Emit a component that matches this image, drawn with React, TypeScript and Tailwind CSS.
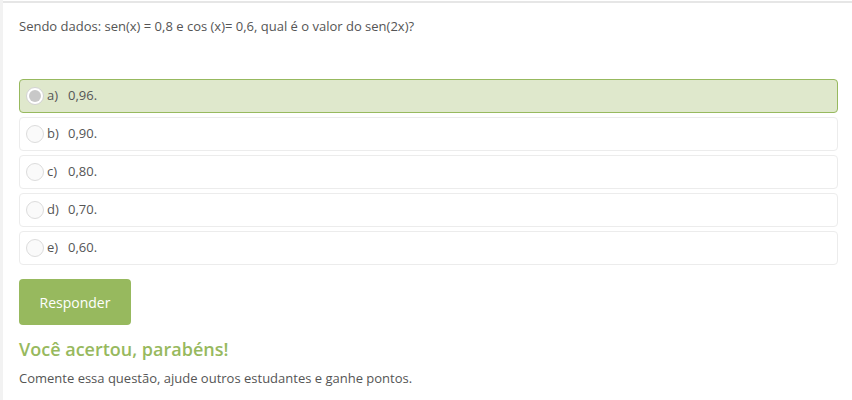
const options = [
  { letter: "a)", value: "0,96.", selected: true },
  { letter: "b)", value: "0,90." },
  { letter: "c)", value: "0,80." },
  { letter: "d)", value: "0,70." },
  { letter: "e)", value: "0,60." },
];

const App = () => {
  return (
    <div
      className="flex h-[400px] w-[852px] bg-white text-[#555]"
      style={{ fontFamily: '"Open Sans", sans-serif' }}
    >
      <div className="w-[3px] shrink-0 bg-[#f2f2f2]" />
      <div className="flex-1 pt-[1px]">
        <div className="border-t-2 border-[#e6e6e6] pl-[16px] pr-[14px]">
          <p className="mt-[13px] text-[13px] leading-[20px]">
            Sendo dados: sen(x) = 0,8 e cos (x)= 0,6, qual é o valor do sen(2x)?
          </p>

          <div className="mt-[43px] flex flex-col gap-[4px]">
            {options.map((opt) => (
              <div
                key={opt.letter}
                className={`flex h-[34px] items-center rounded-[4px] border pl-[6px] text-[13px] ${
                  opt.selected ? "border-[#97b95e] bg-[#dfe8cc]" : "border-[#ececec] bg-white"
                }`}
              >
                <span
                  className={`flex h-[18px] w-[18px] items-center justify-center rounded-full border ${
                    opt.selected ? "border-[#d2d2d2] bg-white" : "border-[#dcdcdc] bg-[#fafafa]"
                  }`}
                >
                  {opt.selected && <span className="h-[12px] w-[12px] rounded-full bg-[#c8c8c8]" />}
                </span>
                <span className="ml-[3px] w-[21px]">{opt.letter}</span>
                <span>{opt.value}</span>
              </div>
            ))}
          </div>

          <button className="mt-[14px] h-[46px] w-[112px] rounded-[4px] bg-[#97b95e] text-[14px] text-white">
            Responder
          </button>

          <h2 className="mt-[12px] text-[18px] font-semibold leading-[24px] text-[#97b95e]">
            Você acertou, parabéns!
          </h2>
          <p className="mt-[8px] text-[13px] leading-[18px]">
            Comente essa questão, ajude outros estudantes e ganhe pontos.
          </p>
        </div>
      </div>
    </div>
  );
};

export default App;
